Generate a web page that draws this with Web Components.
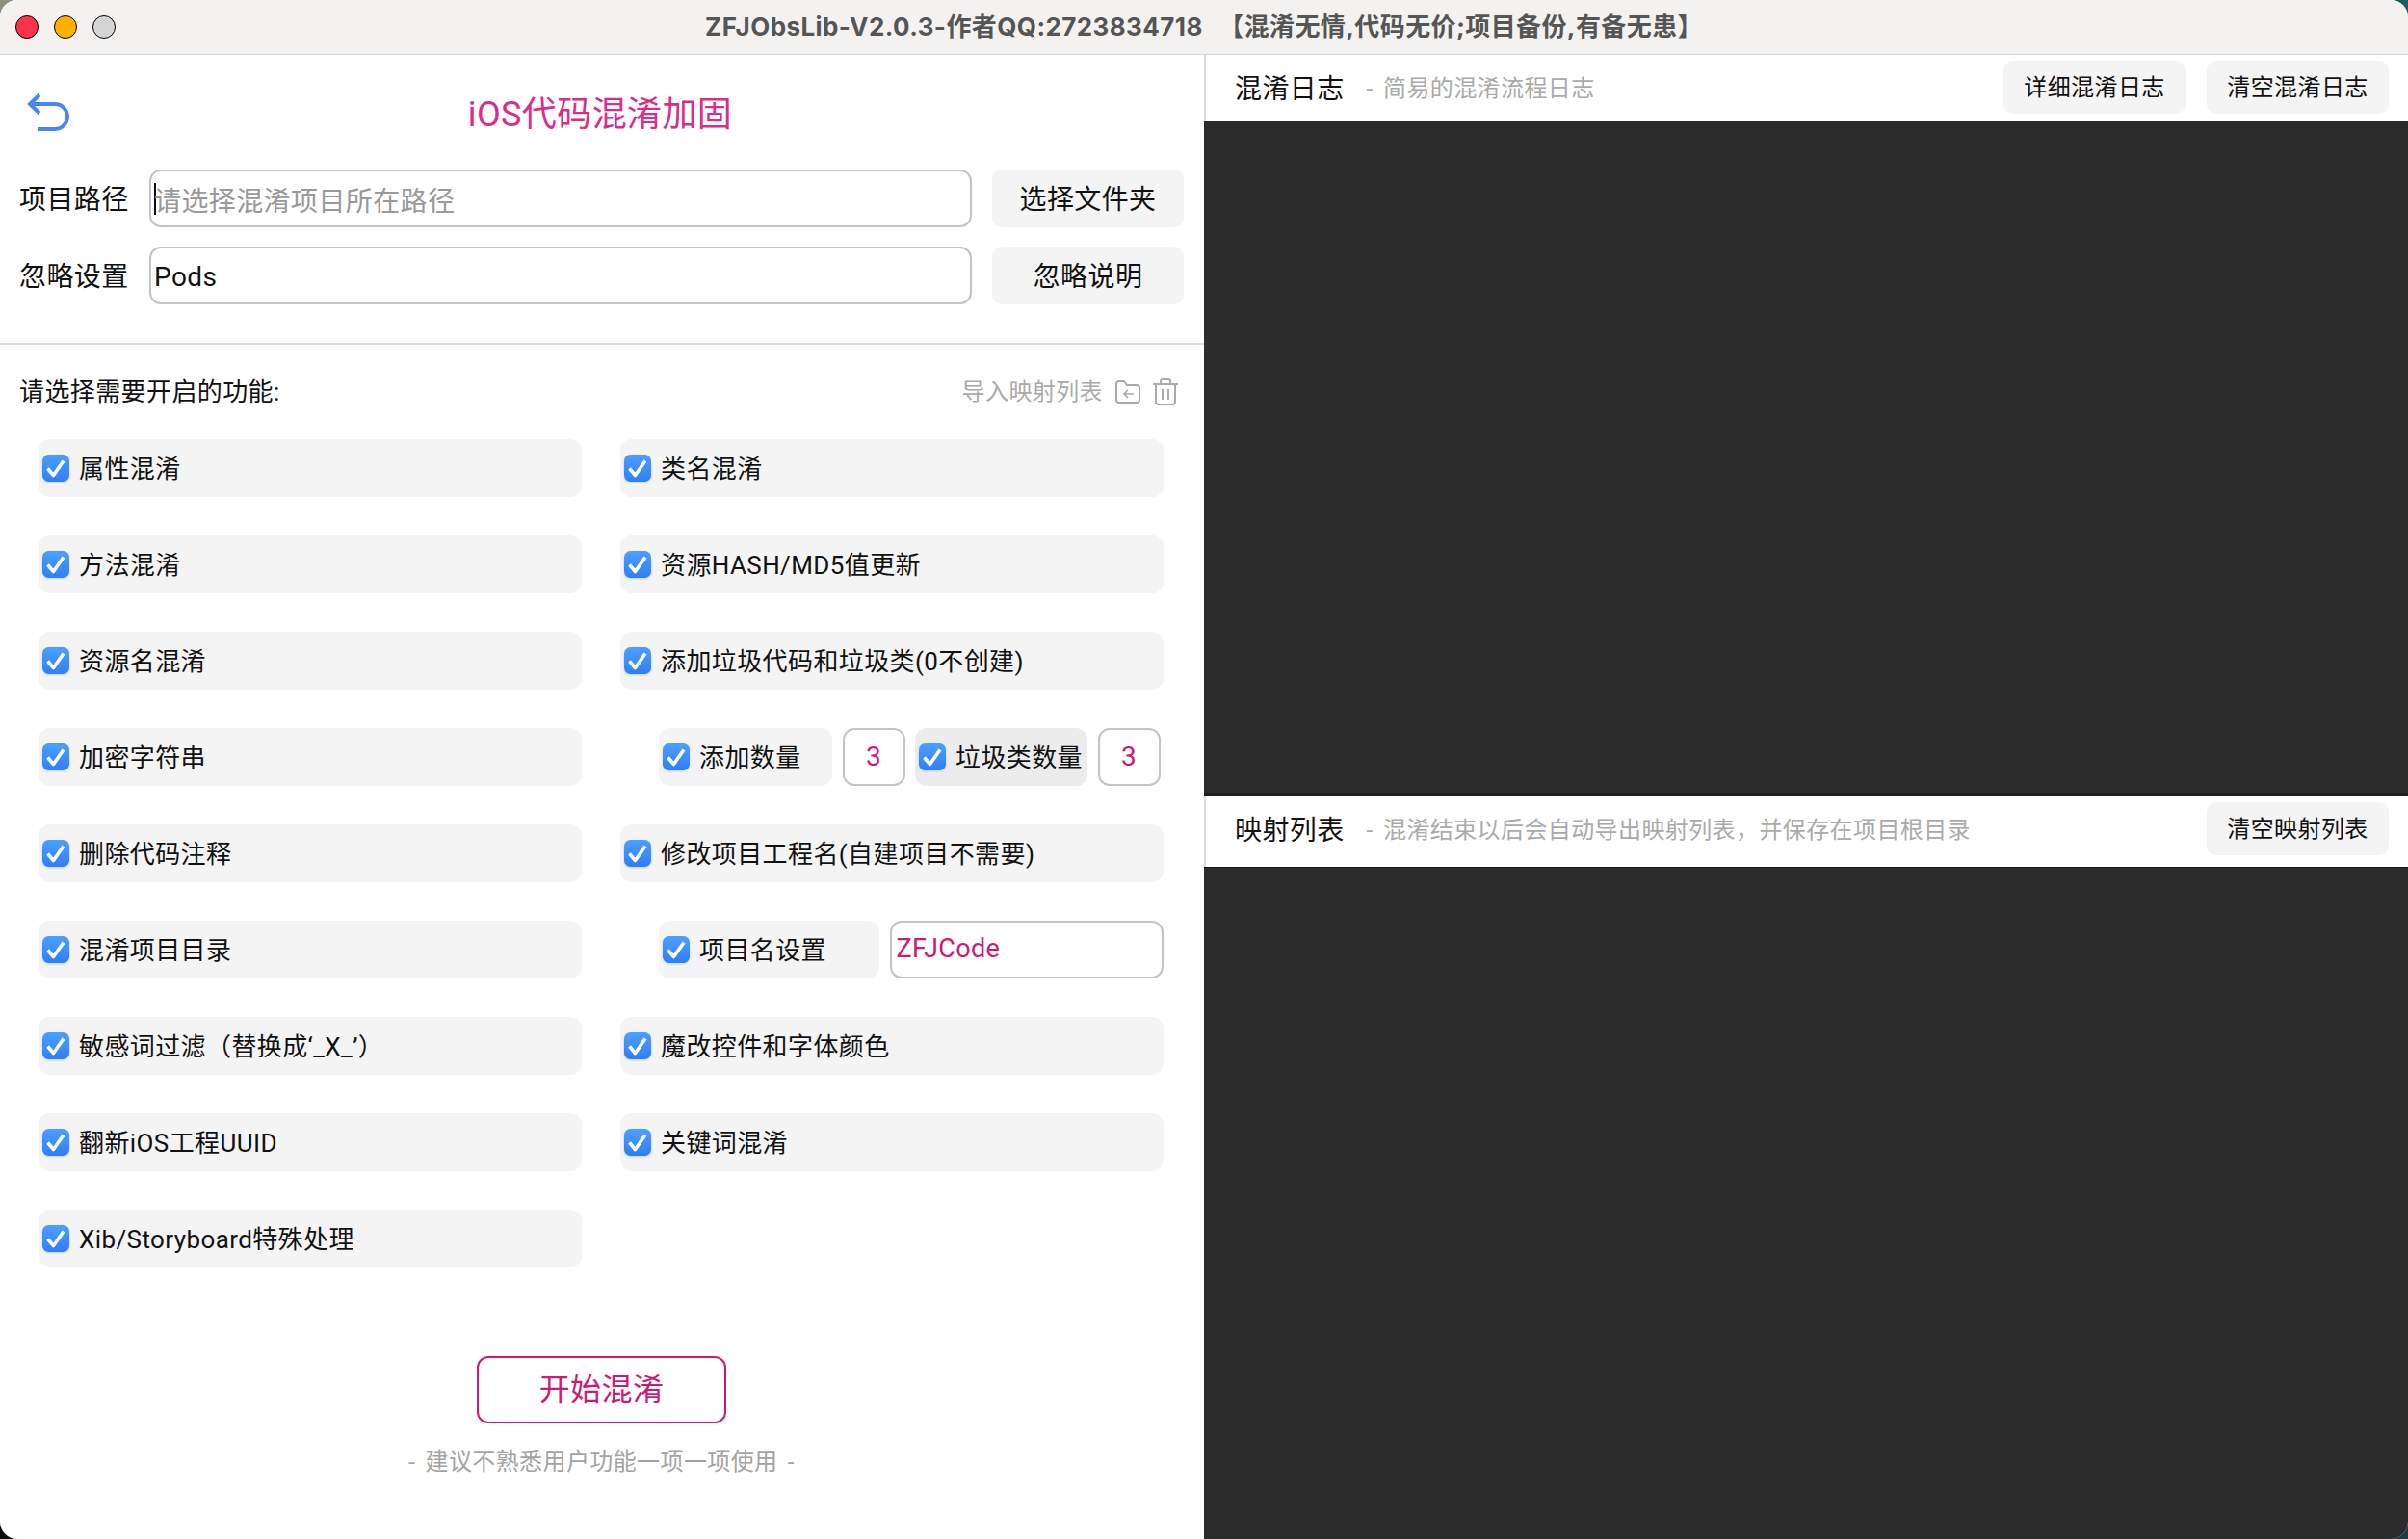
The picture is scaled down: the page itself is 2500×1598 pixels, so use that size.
<!DOCTYPE html>
<html lang="zh">
<head>
<meta charset="utf-8">
<title>ZFJObsLib</title>
<style>
  html { margin: 0; height: 1598px; overflow: hidden; }
  body {
    margin: 0;
    width: 2500px;
    height: 1598px;
    overflow: hidden;
    background:
      linear-gradient(180deg, #8d907c 50%, #0c0c0c 50%) left / 50% 100% no-repeat,
      linear-gradient(180deg, #1f5c62 50%, #1c3d48 50%) right / 50% 100% no-repeat;
    font-family: Roboto, "Noto Sans CJK SC", sans-serif;
    letter-spacing: .4px;
  }
</style>
</head>
<body>
<obs-window>
  <title-bar slot="bar">ZFJObsLib-V2.0.3-作者QQ:2723834718 【混淆无情,代码无价;项目备份,有备无患】</title-bar>

  <left-panel slot="left">
    <path-row label="项目路径" placeholder="请选择混淆项目所在路径" action="选择文件夹" caret></path-row>
    <path-row label="忽略设置" value="Pods" action="忽略说明"></path-row>
    <section-head slot="section">请选择需要开启的功能:</section-head>

    <feature-grid slot="grid">
      <feature-item>属性混淆</feature-item>
      <feature-item>类名混淆</feature-item>
      <feature-item>方法混淆</feature-item>
      <feature-item>资源HASH/MD5值更新</feature-item>
      <feature-item>资源名混淆</feature-item>
      <feature-item>添加垃圾代码和垃圾类(0不创建)</feature-item>
      <feature-item>加密字符串</feature-item>
      <sub-row>
        <feature-item style="width:180px">添加数量</feature-item>
        <value-box style="width:65px" center>3</value-box>
        <feature-item style="width:179px" active>垃圾类数量</feature-item>
        <value-box style="width:65px" center>3</value-box>
      </sub-row>
      <feature-item>删除代码注释</feature-item>
      <feature-item>修改项目工程名(自建项目不需要)</feature-item>
      <feature-item>混淆项目目录</feature-item>
      <sub-row>
        <feature-item style="width:229px">项目名设置</feature-item>
        <value-box style="flex:1">ZFJCode</value-box>
      </sub-row>
      <feature-item>敏感词过滤（替换成‘_X_’）</feature-item>
      <feature-item>魔改控件和字体颜色</feature-item>
      <feature-item>翻新iOS工程UUID</feature-item>
      <feature-item>关键词混淆</feature-item>
      <feature-item>Xib/Storyboard特殊处理</feature-item>
    </feature-grid>

    <start-button slot="start" hint="- 建议不熟悉用户功能一项一项使用 -">开始混淆</start-button>
  </left-panel>

  <log-pane slot="right" class="first" name="混淆日志" sub="- 简易的混淆流程日志">
    <tool-button>详细混淆日志</tool-button>
    <tool-button>清空混淆日志</tool-button>
  </log-pane>
  <log-pane slot="right" class="second" name="映射列表" sub="- 混淆结束以后会自动导出映射列表，并保存在项目根目录">
    <tool-button>清空映射列表</tool-button>
  </log-pane>
</obs-window>

<script>
(function(w, doc) {
  'use strict';

  function define(name, css, html) {
    customElements.define(name, class extends HTMLElement {
      constructor() {
        super();
        this.attachShadow({ mode: 'open' });
      }
      connectedCallback() {
        if (this.shadowRoot.childNodes.length) return;
        const body = typeof html === 'function' ? html(this) : html;
        this.shadowRoot.innerHTML = `<style>${css}</style>${body}`;
      }
    });
  }

  define('obs-window', `
    :host{display:flex;flex-direction:column;width:2500px;height:1598px;background:#fff;
      border-radius:18px;overflow:hidden}
    .main{flex:1;display:flex;min-height:0}
    .left{display:block;width:1250px;flex:none}
    .right{flex:1;display:flex;flex-direction:column;min-width:0}
  `, `
    <slot name="bar"></slot>
    <div class="main">
      <div class="left"><slot name="left"></slot></div>
      <div class="right"><slot name="right"></slot></div>
    </div>
  `);

  define('title-bar', `
    :host{display:grid;place-items:center;height:56px;flex:none;background:#f3f2f1;
      border-bottom:1px solid #d8d8d8;position:relative}
    .lights{position:absolute;left:16px;top:16px;display:flex;gap:16px}
    .lights i{box-sizing:border-box;width:24px;height:24px;border-radius:50%;border:1px solid}
    .r{background:#ff3347;border-color:#ee3040}
    .y{background:#ffb000;border-color:#ee9f00}
    .g{background:#d5d5d5;border-color:#b9b9b9}
    .t{font-family:Inter,"Noto Sans CJK SC",sans-serif;font-size:26px;font-weight:700;color:#555;white-space:pre;
      letter-spacing:.4px;word-spacing:10px;position:relative;top:-3px}
  `, `
    <div class="lights"><i class="r"></i><i class="y"></i><i class="g"></i></div>
    <div class="t"><slot></slot></div>
  `);

  define('left-panel', `
    :host{display:flex;flex-direction:column;height:1541px}
    .head{display:grid;grid-template-columns:1fr auto 1fr;align-items:center;height:119px;flex:none}
    .head svg{margin-left:28px;display:block}
    h1{margin:0;font-size:36px;font-weight:400;color:#dc2c8a;line-height:1;position:relative;top:2px;left:-2px}
    .rows{display:flex;flex-direction:column;gap:20px}
    hr{margin:40px 0 0;border:none;height:2px;background:#dedede;flex:none}
  `, `
    <div class="head">
      <svg width="46" height="42" viewBox="28 95 46 42" fill="none" stroke="#4a86f0" stroke-width="4">
        <path d="M41 97.500 31 107l10 9.500"/>
        <path d="M31 107h26a13 13 0 0 1 0 26H39"/>
      </svg>
      <h1>iOS代码混淆加固</h1>
    </div>
    <div class="rows"><slot></slot></div>
    <hr>
    <slot name="section"></slot>
    <slot name="grid"></slot>
    <slot name="start"></slot>
  `);

  define('value-box', `
    :host{display:flex;align-items:center;box-sizing:border-box;height:60px;flex:none;background:#fff;
      border:2px solid #c4c4c4;border-radius:12px;padding:0 0 2px 5px;font-size:27px;color:#cd1a72}
    :host([center]){justify-content:center;padding:0 0 2px;font-size:28px}
  `, `<slot></slot>`);

  define('path-row', `
    :host{display:flex;align-items:center;height:60px;padding-left:20px}
    .label{width:112px;font-size:28px;color:#111;margin-right:23px;line-height:1;white-space:nowrap;position:relative;top:2px}
    .box{box-sizing:border-box;width:854px;height:60px;background:#fff;border:2px solid #c4c4c4;border-radius:12px;
      display:flex;align-items:center;padding-left:3px;font-size:28px;color:#111;position:relative}
    .box.empty{color:#999}
    .box span{position:relative;top:1px}
    .caret{position:absolute;left:3px;top:12px;width:2px;height:33px;background:#111}
    button{all:unset;box-sizing:border-box;width:199px;height:60px;margin-left:21px;background:#f4f4f4;border-radius:10px;
      text-align:center;font:inherit;font-size:28px;color:#111;line-height:64px}
  `, el => `
    <div class="label">${el.getAttribute('label')}</div>
    <div class="box ${el.hasAttribute('value') ? '' : 'empty'}">
      ${el.hasAttribute('caret') ? '<i class="caret"></i>' : ''}
      <span>${el.getAttribute('value') || el.getAttribute('placeholder')}</span>
    </div>
    <button>${el.getAttribute('action')}</button>
  `);

  define('section-head', `
    :host{display:flex;align-items:center;height:98px;padding:0 27px 0 20px;flex:none}
    .t{font-size:26px;color:#111;line-height:1}
    .import{margin-left:auto;display:flex;align-items:center;gap:13px;color:#aaa;font-size:24px;line-height:1}
    svg{display:block}
  `, `
    <div class="t"><slot></slot></div>
    <div class="import">
      <span>导入映射列表</span>
      <svg width="26" height="25" viewBox="0 0 26 25" fill="none" stroke="#aaa" stroke-width="2">
        <path d="M1 4a3 3 0 0 1 3-3h5l3 4h10a3 3 0 0 1 3 3v12a3 3 0 0 1-3 3H4a3 3 0 0 1-3-3z"/>
        <path d="M19 14H9m4-4-4 4 4 4" stroke-width="1.600"/>
      </svg>
      <svg width="26" height="28" viewBox="0 0 26 28" fill="none" stroke="#aaa" stroke-width="2">
        <path d="M0 6h26M8 6V3a2 2 0 0 1 2-2h6a2 2 0 0 1 2 2v3"/>
        <path d="M3 6v18a3 3 0 0 0 3 3h14a3 3 0 0 0 3-3V6M10 11v11M16 11v11"/>
      </svg>
    </div>
  `);

  define('feature-grid', `
    :host{display:grid;grid-template-columns:564px 564px;column-gap:40px;row-gap:40px;
      grid-auto-rows:60px;padding-left:40px;flex:none}
  `, `<slot></slot>`);

  define('feature-item', `
    :host{display:flex;align-items:center;box-sizing:border-box;height:60px;flex:none;background:#f4f4f4;
      border-radius:12px;padding-left:4px;font-size:26px;color:#111;white-space:nowrap}
    :host([active]){background:#ececec}
    svg{display:block;flex:none;margin-right:10px;filter:drop-shadow(0 1px 1px rgba(40,110,230,.25))}
    span{position:relative;top:-2px}
  `, `
    <svg width="28" height="28" viewBox="0 0 28 28">
      <defs><linearGradient id="g" x1="0" y1="0" x2="0" y2="1">
        <stop offset="0" stop-color="#4d9fff"/><stop offset="1" stop-color="#2f7ef6"/>
      </linearGradient></defs>
      <rect width="28" height="28" rx="6.500" fill="url(#g)"/>
      <path d="M5.500 14.500 11.500 21.500 22 6.500" fill="none" stroke="#fff" stroke-width="3.600" stroke-linejoin="round"/>
    </svg>
    <span><slot></slot></span>
  `);

  define('sub-row', `
    :host{display:flex;gap:10.500px;height:60px;padding-left:40px}
  `, `<slot></slot>`);

  define('start-button', `
    :host{display:flex;flex-direction:column;align-items:center;padding:92px 1px 0 0}
    button{all:unset;box-sizing:border-box;width:259px;height:70px;border:2px solid #cf1a72;border-radius:12px;
      text-align:center;font:inherit;font-size:32px;color:#cf1a72;line-height:66px}
    p{margin:25px 0 0;font-size:24px;line-height:30px;color:#a3a3a3;white-space:nowrap;word-spacing:4px}
  `, el => `
    <button><slot></slot></button>
    <p>${el.getAttribute('hint')}</p>
  `);

  define('tool-button', `
    :host{display:block;box-sizing:border-box;width:189px;height:55px;background:#f4f4f4;border-radius:10px;
      text-align:center;font-size:24px;line-height:57px;color:#111}
  `, `<slot></slot>`);

  define('log-pane', `
    :host{display:flex;flex-direction:column;min-height:0}
    :host(.first){height:769px}
    :host(.second){flex:1}
    .head{display:flex;flex:none;align-items:flex-start;box-sizing:border-box;border-left:2px solid #dedede;background:#fff;
      padding:6px 20px 0 30px}
    :host(.first) .head{height:69px}
    :host(.second) .head{height:74px;padding-top:7px}
    .name{font-size:28px;line-height:55px;color:#111;margin-right:23px;white-space:nowrap;position:relative;top:2px}
    .sub{font-size:24px;line-height:55px;color:#aaa;white-space:nowrap;word-spacing:4px;position:relative;top:2px}
    .tools{margin-left:auto;display:flex;gap:22px}
    .dark{flex:1;background:#2b2b2b}
    :host(.first) .dark{border-bottom:3px solid #1f1f1f}
    :host(.second) .dark{border-top:1px solid #161616}
  `, el => `
    <div class="head">
      <span class="name">${el.getAttribute('name')}</span>
      <span class="sub">${el.getAttribute('sub')}</span>
      <div class="tools"><slot></slot></div>
    </div>
    <div class="dark"></div>
  `);

})(window, document);
</script>
</body>
</html>
